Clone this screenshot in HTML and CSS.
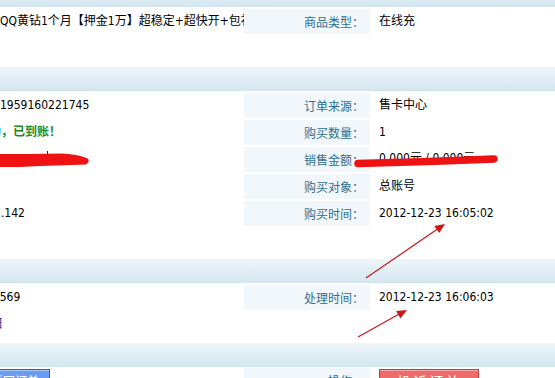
FILE: index.html
```html
<!DOCTYPE html>
<html>
<head>
<meta charset="utf-8">
<link rel="stylesheet" href="styles.css">
</head>
<body>
<div class="page">
  <section class="sec">
    <div class="band"></div>
    <div class="row">
      <div class="val left">QQ黄钻1个月【押金1万】超稳定+超快开+包补充</div>
      <div class="lab">商品类型：</div>
      <div class="val">在线充</div>
    </div>
  </section>

  <section class="sec">
    <div class="band"></div>
    <div class="row">
      <div class="val left">1959160221745</div>
      <div class="lab">订单来源：</div>
      <div class="val">售卡中心</div>
    </div>
    <div class="row">
      <div class="val left ok cut-ok">功，已到账！</div>
      <div class="lab">购买数量：</div>
      <div class="val">1</div>
    </div>
    <div class="row">
      <div class="val left"></div>
      <div class="lab">销售金额：</div>
      <div class="val hidden-amt">0.000元 / 0.000元</div>
    </div>
    <div class="row">
      <div class="val left"></div>
      <div class="lab">购买对象：</div>
      <div class="val">总账号</div>
    </div>
    <div class="row">
      <div class="val left cut-ip">192.168.1.142</div>
      <div class="lab">购买时间：</div>
      <div class="val">2012-12-23 16:05:02</div>
    </div>
  </section>

  <section class="sec sec-short">
    <div class="band"></div>
    <div class="row">
      <div class="val left cut-num">18569</div>
      <div class="lab">处理时间：</div>
      <div class="val">2012-12-23 16:06:03</div>
    </div>
    <div class="row plain">
      <div class="val left link cut-link">查看明细</div>
      <div class="lab"></div>
      <div class="val"></div>
    </div>
  </section>

  <section class="sec">
    <div class="band"></div>
    <div class="row btn-row">
      <div class="val left"><span class="btn btn-blue">返回订单</span></div>
      <div class="lab">操作：</div>
      <div class="val"><span class="btn btn-red">投诉订单</span></div>
    </div>
  </section>
</div>

<svg class="marks" width="555" height="378" viewBox="0 0 555 378">
  <line x1="47.5" y1="151" x2="47.5" y2="155" stroke="#222" stroke-width="1"/>
  <path d="M-4 154 L30 154 L62 153.5 Q76 154.5 82 156.5 L87 158 Q91 161.5 86 164.5 L72 165 L40 166 L20 167 L-4 167 Z" fill="#ee1212"/>
  <path d="M358 163.5 Q425 162 494 159" stroke="#ee1212" stroke-width="7.5" stroke-linecap="round" fill="none"/>
  <line x1="366" y1="278" x2="439" y2="228" stroke="#cc1515" stroke-width="1.2"/>
  <polygon points="445,224 439.2,233 434.3,226" fill="#cc1515"/>
  <line x1="358" y1="337" x2="401" y2="313" stroke="#cc1515" stroke-width="1.2"/>
  <polygon points="407,310 400.4,318.6 396.1,311" fill="#cc1515"/>
</svg>
</body>
</html>
```

FILE: styles.css
```css
* {
  box-sizing: border-box;
  margin: 0;
  padding: 0;
}

html,
body {
  width: 555px;
  height: 378px;
  overflow: hidden;
  background: #fff;
}

body {
  position: relative;
  font-family: "DejaVu Sans Condensed", "Noto Sans CJK SC", sans-serif;
  font-size: 12px;
  line-height: 25px;
  color: #000;
}

.page {
  margin-top: -17px;
}

.sec {
  margin-bottom: 33px;
}

.sec-short {
  margin-bottom: 6px;
}

.band {
  height: 24px;
  background: linear-gradient(#eef6fa, #d3e6ef);
}

.row {
  display: grid;
  grid-template-columns: 244px 126px 1fr;
  height: 25px;
  margin-top: 2px;
}

.lab {
  background: #f1f7fb;
  color: #2f6f8f;
  text-align: right;
  padding-right: 6px;
  white-space: nowrap;
  font-family: "Noto Sans CJK SC", sans-serif;
}

.row.plain .lab {
  background: transparent;
}

.val {
  padding-left: 9px;
  white-space: nowrap;
  overflow: hidden;
}

.val.left {
  padding-left: 0;
}

.hidden-amt {
  line-height: 23px;
}

.ok {
  color: #1a8a1a;
  font-weight: bold;
}

.cut-ok {
  text-indent: -11px;
}

.cut-ip {
  text-indent: -54px;
}

.cut-num {
  text-indent: -14px;
}

.link {
  color: #0a1a80;
}

.cut-link {
  text-indent: -46px;
}

.btn-row {
  margin-top: 1px;
  overflow: visible;
}

.btn-row .val {
  overflow: visible;
  line-height: 20px;
  padding-top: 1px;
}

.btn {
  display: inline-block;
  height: 24px;
  line-height: 22px;
  text-align: center;
  color: #fff;
  font-family: "Noto Sans CJK SC", sans-serif;
}

.btn-blue {
  width: 70px;
  margin-left: -20px;
  border: 1px solid #2d5ca8;
  background: #6b9cf2;
  box-shadow: inset 0 1px 0 #a9c8fa;
}

.btn-red {
  width: 100px;
  border: 1px solid #c23b3b;
  background: #ef6b6b;
  box-shadow: inset 0 1px 0 #f7a7a7;
  font-size: 14px;
  letter-spacing: 2px;
}

.marks {
  position: absolute;
  top: 0;
  left: 0;
  pointer-events: none;
}
```
